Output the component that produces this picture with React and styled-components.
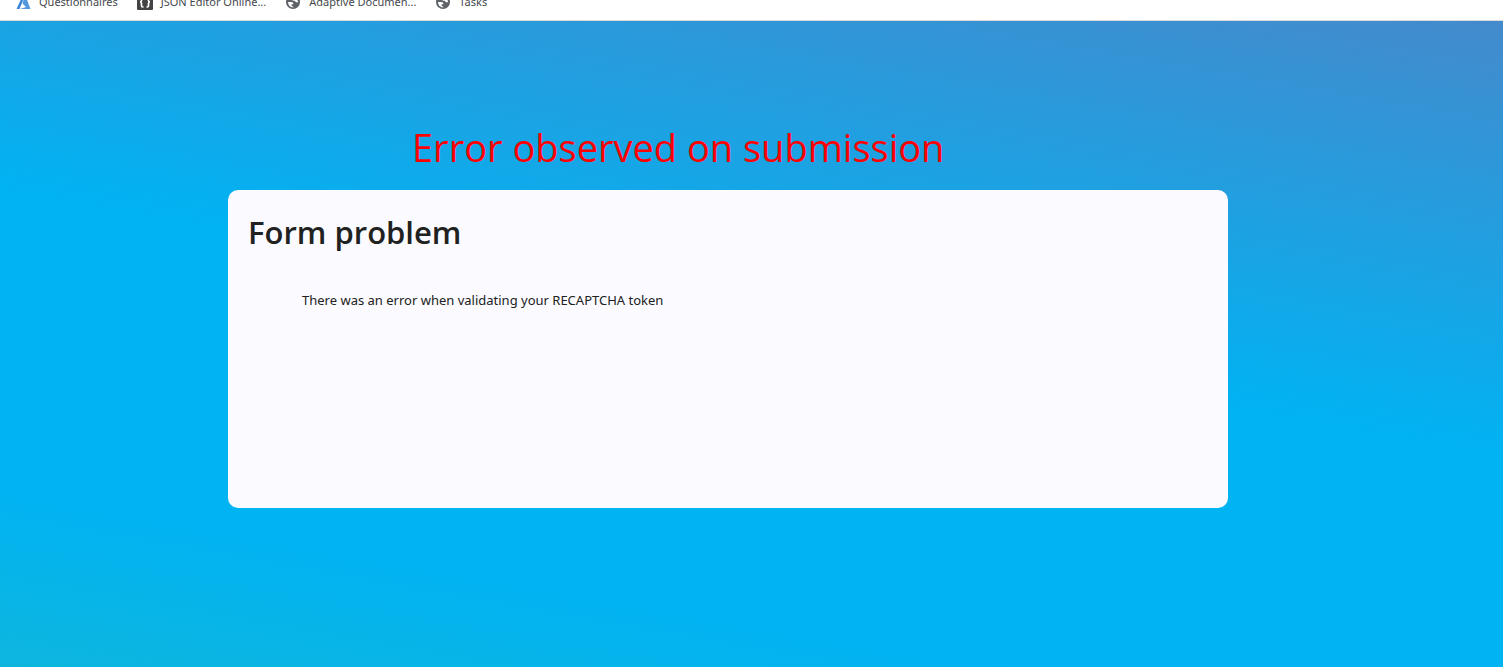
import React from "react";
import styled, { createGlobalStyle } from "styled-components";

const GlobalStyle = createGlobalStyle`
  * { box-sizing: border-box; }
  body {
    margin: 0;
    font-family: "Noto Sans", "Open Sans", sans-serif;
    color: #212121;
  }
`;

const Page = styled.div`
  display: flex;
  flex-direction: column;
  min-height: 100vh;
`;

const BookmarkBar = styled.nav`
  overflow: hidden;
  background: #ffffff;
  border-bottom: 1px solid #d9d9d9;
`;

const BookmarkList = styled.ul`
  display: flex;
  gap: 19px;
  margin: -6px 0 0;
  padding: 0 15px 10px;
  list-style: none;
`;

const Bookmark = styled.a`
  display: flex;
  align-items: center;
  gap: 8px;
  font-size: 11px;
  line-height: 16px;
  white-space: nowrap;
  color: #45484c;
  text-decoration: none;
`;

const Icon = styled.svg`
  display: block;
  width: 16px;
  height: 16px;
`;

const Backdrop = styled.main`
  flex: 1;
  padding: 100px 47px 24px 0;
  background: linear-gradient(190deg, #448acc 0%, #00b3f3 48%, #00b3f3 80%, #0eb6de 100%);
`;

const Column = styled.div`
  max-width: 1000px;
  margin: 0 auto;
`;

const Caption = styled.p`
  margin: 0;
  padding: 0 0 16px 184px;
  font-family: "Open Sans", "Noto Sans", sans-serif;
  font-size: 38px;
  line-height: 53px;
  color: #ff0000;
`;

const Card = styled.section`
  min-height: 318px;
  padding: 20px;
  border-radius: 10px;
  background: #fbfbff;
`;

const Title = styled.h1`
  margin: 0 0 36px;
  font-family: "Open Sans", "Noto Sans", sans-serif;
  font-size: 31px;
  line-height: 44px;
  font-weight: 600;
`;

const Message = styled.p`
  margin: 0;
  padding-left: 54px;
  font-size: 13px;
  line-height: 20px;
`;

function AzureIcon() {
  return (
    <Icon viewBox="0 0 16 16" aria-hidden="true">
      <path d="M7 3h2.500L4.500 15H1.500z" fill="#3f86d8" />
      <path d="M9.500 3h1.500L15.500 15H5l6-2-3.500-3.500z" fill="#5499e0" />
    </Icon>
  );
}

function JsonIcon() {
  return (
    <Icon viewBox="0 0 16 16" aria-hidden="true">
      <rect width="16" height="16" rx="1" fill="#444444" />
      <path
        d="M6.500 3H5.800Q4.500 3 4.500 4.300v2.200Q4.500 8 3 8q1.500 0 1.500 1.500v2.200Q4.500 13 5.800 13h.7M9.500 3h.7q1.300 0 1.300 1.300v2.200Q11.500 8 13 8q-1.500 0-1.500 1.500v2.200Q11.500 13 10.200 13h-.7"
        fill="none"
        stroke="#ffffff"
        strokeWidth="1.7"
      />
    </Icon>
  );
}

function GlobeIcon() {
  return (
    <Icon viewBox="0 0 16 16" aria-hidden="true">
      <circle cx="8" cy="8" r="7" fill="#5f6368" />
      <path
        d="M3 8h3.400q2.200.2 2 2.200H6.600v1.200q.2.900 1.700 1v1.200Q3.200 13 3 8zM8.500 3.500q3.500.5 4.600 4.200-.7.900-2 .5-1.300-.4-1.200-1.500H8q-1-.6-.2-1.700h.7z"
        fill="#ffffff"
      />
    </Icon>
  );
}

const bookmarks = [
  { label: "Questionnaires", Glyph: AzureIcon },
  { label: "JSON Editor Online...", Glyph: JsonIcon },
  { label: "Adaptive Documen...", Glyph: GlobeIcon },
  { label: "Tasks", Glyph: GlobeIcon },
];

export default function App() {
  return (
    <Page>
      <GlobalStyle />
      <BookmarkBar aria-label="Bookmarks">
        <BookmarkList>
          {bookmarks.map(({ label, Glyph }) => (
            <li key={label}>
              <Bookmark href="#">
                <Glyph />
                {label}
              </Bookmark>
            </li>
          ))}
        </BookmarkList>
      </BookmarkBar>
      <Backdrop>
        <Column>
          <Caption>Error observed on submission</Caption>
          <Card>
            <Title>Form problem</Title>
            <Message>There was an error when validating your RECAPTCHA token</Message>
          </Card>
        </Column>
      </Backdrop>
    </Page>
  );
}
